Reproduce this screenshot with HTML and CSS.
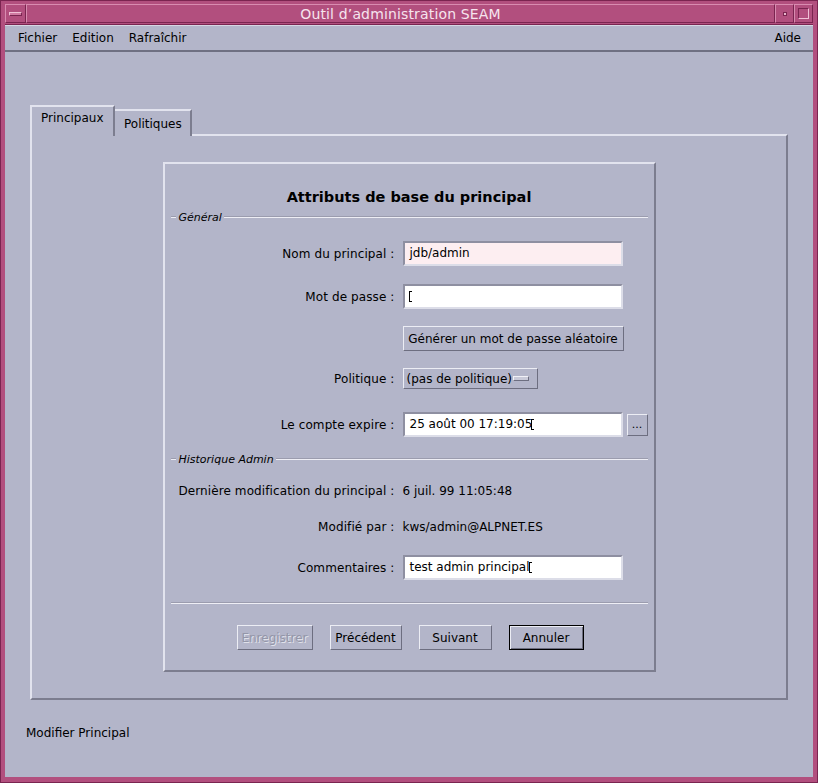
FILE: index.html
```html
<!DOCTYPE html>
<html lang="fr">
<head>
<meta charset="utf-8">
<title>Outil d'administration SEAM</title>
<link rel="stylesheet" href="styles.css">
</head>
<body>
<div class="window">
  <div class="titlebar">
    <div class="tb-box tb-menu"><span class="tb-minus"></span></div>
    <div class="tb-title">Outil d’administration SEAM</div>
    <div class="tb-box tb-min"><span class="tb-dot"></span></div>
    <div class="tb-box tb-max"><span class="tb-square"></span></div>
  </div>
  <div class="client">
    <div class="menubar">
      <span class="menu-item">Fichier</span>
      <span class="menu-item">Edition</span>
      <span class="menu-item">Rafraîchir</span>
      <span class="menu-spacer"></span>
      <span class="menu-item menu-last">Aide</span>
    </div>
    <div class="workspace">
      <div class="tabs">
        <div class="tab tab-active">Principaux</div>
        <div class="tab">Politiques</div>
      </div>
      <div class="panel">
        <div class="dialog">
          <h1 class="dlg-title">Attributs de base du principal</h1>
          <div class="group-head"><span class="gh-lead"></span><span class="gh-label">Général</span><span class="gh-line"></span></div>
          <div class="row row-a">
            <label class="lbl">Nom du principal :</label>
            <div class="field field-pink">jdb/admin</div>
          </div>
          <div class="row row-b">
            <label class="lbl">Mot de passe :</label>
            <div class="field"><span class="ibeam"></span></div>
          </div>
          <div class="row row-c">
            <span></span>
            <div class="btn btn-wide">Générer un mot de passe aléatoire</div>
          </div>
          <div class="row row-d">
            <label class="lbl">Politique :</label>
            <div class="option"><span>(pas de politique)</span><span class="opt-ind"></span></div>
          </div>
          <div class="row row-e">
            <label class="lbl">Le compte expire :</label>
            <div class="field">25 août 00 17:19:05<span class="ibeam"></span></div>
            <div class="btn btn-dots">...</div>
          </div>
          <div class="group-head gh-2"><span class="gh-lead"></span><span class="gh-label">Historique Admin</span><span class="gh-line"></span></div>
          <div class="row row-f">
            <label class="lbl">Dernière modification du principal :</label>
            <div class="value">6 juil. 99 11:05:48</div>
          </div>
          <div class="row row-g">
            <label class="lbl">Modifié par :</label>
            <div class="value">kws/admin@ALPNET.ES</div>
          </div>
          <div class="row row-h">
            <label class="lbl">Commentaires :</label>
            <div class="field">test admin principal<span class="ibeam"></span></div>
          </div>
          <div class="separator"></div>
          <div class="actions">
            <div class="btn btn-action btn-disabled">Enregistrer</div>
            <div class="btn btn-action btn-prev">Précédent</div>
            <div class="btn btn-action btn-next">Suivant</div>
            <div class="btn btn-action btn-default">Annuler</div>
          </div>
        </div>
      </div>
      <div class="status">Modifier Principal</div>
    </div>
  </div>
</div>
</body>
</html>
```
FILE: styles.css
```css
* { box-sizing: border-box; }
html, body { margin: 0; padding: 0; }
body {
  width: 818px;
  height: 783px;
  overflow: hidden;
  font-family: "DejaVu Sans", "Liberation Sans", sans-serif;
  font-size: 12px;
  color: #000;
  background: #b24f7e;
}
.window {
  width: 818px;
  height: 783px;
  background: #b24f7e;
  border: 1px solid #7a2550;
  padding: 0 4px 5px 4px;
  display: flex;
  flex-direction: column;
}
.titlebar {
  height: 23px;
  display: flex;
  align-items: stretch;
  padding-top: 3px;
  padding-bottom: 1px;
}
.tb-box {
  border: 1px solid;
  border-color: #d98cb0 #7a2550 #7a2550 #d98cb0;
  display: flex;
  align-items: center;
  justify-content: center;
}
.tb-menu { width: 21px; }
.tb-minus {
  width: 13px;
  height: 4px;
  background: #d07aa2;
  border: 1px solid;
  border-color: #f0c0d6 #7a2550 #7a2550 #f0c0d6;
}
.tb-title {
  flex: 1;
  text-align: center;
  color: #f6e4ee;
  font-size: 14px;
  letter-spacing: 0.15px;
  line-height: 18px;
  border: 1px solid;
  border-color: #d98cb0 #7a2550 #7a2550 #d98cb0;
}
.tb-min { width: 19px; }
.tb-dot {
  width: 4px;
  height: 4px;
  background: #e8b6cc;
  border: 1px solid #7a2550;
}
.tb-max { width: 19px; }
.tb-square {
  width: 11px;
  height: 11px;
  border: 1px solid;
  border-color: #7a2550 #f0c0d6 #f0c0d6 #7a2550;
}
.client {
  flex: 1;
  background: #b3b5c9;
  display: flex;
  flex-direction: column;
  border-top: 1px solid #7a2550;
}
.menubar {
  height: 27px;
  display: flex;
  align-items: center;
  padding: 0 12px 0 13px;
  border-top: 1px solid #d6d7e3;
  border-bottom: 2px solid #6f7082;
  font-size: 12px;
}
.menu-item { margin-right: 15px; }
.menu-last { margin-right: 0; }
.menu-spacer { flex: 1; }
.workspace {
  flex: 1;
  padding: 55px 25px 0 25px;
  display: flex;
  flex-direction: column;
}
.tabs {
  display: flex;
  align-items: flex-end;
  height: 29px;
  position: relative;
  z-index: 1;
  margin-bottom: -2px;
}
.tab {
  height: 27px;
  padding: 0 8px 0 9px;
  font-size: 12px;
  line-height: 27px;
  border-top: 2px solid #e2e3ee;
  border-right: 2px solid #7c7d8f;
  background: #b3b5c9;
}
.tab-active {
  height: 31px;
  line-height: 22px;
  padding: 0 9px 0 9px;
  border-left: 2px solid #e2e3ee;
  border-right: 2px solid #7c7d8f;
  width: 85px;
}
.panel {
  height: 566px;
  border: 2px solid;
  border-color: #e2e3ee #7c7d8f #7c7d8f #e2e3ee;
  display: flex;
  align-items: center;
  justify-content: center;
}
.dialog {
  width: 493px;
  height: 510px;
  border: 2px solid;
  border-color: #e2e3ee #7c7d8f #7c7d8f #e2e3ee;
  padding: 0 6px;
  display: flex;
  flex-direction: column;
}
.dlg-title {
  margin: 23px 0 0;
  font-size: 14.5px;
  font-weight: bold;
  line-height: 20px;
  text-align: center;
}
.group-head {
  display: flex;
  align-items: center;
  height: 14px;
  margin-top: 3px;
}
.gh-2 { margin-top: 15px; }
.gh-lead, .gh-line {
  height: 2px;
  border-top: 1px solid #9b9cae;
  border-bottom: 1px solid #eeeef5;
}
.gh-lead { width: 5px; }
.gh-line { flex: 1; }
.gh-label {
  font-style: italic;
  padding: 0 2px 0 3px;
  font-size: 11px;
}
.row {
  display: grid;
  grid-template-columns: 224px 220px auto;
  column-gap: 8px;
  align-items: center;
}
.lbl {
  text-align: right;
  white-space: nowrap;
  font-size: 12px;
  letter-spacing: 0.1px;
}
.row-a { margin-top: 17px; }
.row-b { margin-top: 18px; }
.row-c { margin-top: 17px; }
.row-d { margin-top: 17px; }
.row-e { margin-top: 23px; grid-template-columns: 224px 220px 21px; column-gap: 8px; }
.row-e .btn-dots { margin-left: -4px; }
.row-f { margin-top: 17px; height: 16px; }
.row-g { margin-top: 20px; height: 16px; }
.row-h { margin-top: 20px; }
.field {
  height: 25px;
  background: #fff;
  border: 2px solid;
  border-color: #8e8fa1 #dcdde8 #dcdde8 #8e8fa1;
  padding: 0 5px;
  line-height: 21px;
  font-size: 12px;
  white-space: nowrap;
  display: flex;
  align-items: center;
}
.field-pink { background: #fdeef1; }
.ibeam {
  display: inline-block;
  width: 3px;
  height: 11px;
  border-left: 1px solid #000;
  border-top: 1px solid #000;
  border-bottom: 1px solid #000;
  position: relative;
  left: -1px;
}
.value {
  font-size: 12px;
  white-space: nowrap;
}
.btn {
  height: 25px;
  border: 1px solid;
  border-color: #ecedf4 #6d6e80 #6d6e80 #ecedf4;
  background: #b3b5c9;
  display: flex;
  align-items: center;
  justify-content: center;
  font-size: 12px;
  white-space: nowrap;
}
.btn-wide { width: 221px; }
.btn-dots {
  width: 21px;
  height: 22px;
  font-size: 11px;
  line-height: 1;
  align-items: flex-end;
  padding-bottom: 5px;
}
.option {
  width: 135px;
  height: 21px;
  border: 1px solid;
  border-color: #ecedf4 #6d6e80 #6d6e80 #ecedf4;
  display: flex;
  align-items: center;
  padding: 0 8px 0 3px;
  font-size: 12px;
  justify-content: space-between;
}
.opt-ind {
  width: 16px;
  height: 5px;
  background: #c9cad9;
  border: 1px solid;
  border-color: #f1f1f7 #6d6e80 #6d6e80 #f1f1f7;
}
.separator {
  margin-top: 22px;
  height: 2px;
  border-top: 1px solid #9b9cae;
  border-bottom: 1px solid #eeeef5;
}
.actions {
  margin-top: 21px;
  display: flex;
  justify-content: center;
  gap: 17px;
  padding-left: 2px;
}
.btn-action { height: 25px; }
.btn-disabled {
  width: 76px;
  color: #9496a8;
  text-shadow: 1px 1px 0 #e0e1ea;
}
.btn-prev { width: 72px; }
.btn-next { width: 73px; }
.btn-default {
  width: 75px;
  border: 1px solid #000;
  box-shadow: inset 1px 1px 0 #ecedf4, inset -1px -1px 0 #6d6e80;
}
.status {
  margin-top: 25px;
  margin-left: -4px;
  font-size: 12px;
  line-height: 16px;
}
```
